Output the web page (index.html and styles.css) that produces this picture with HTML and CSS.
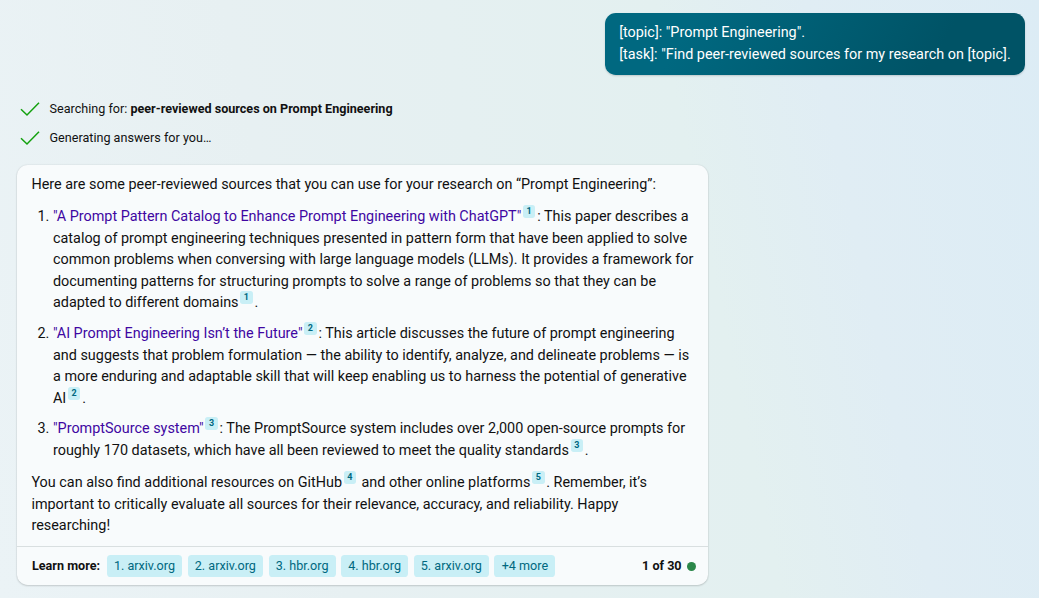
FILE: index.html
```html
<!DOCTYPE html>
<html lang="en">
<head>
    <meta charset="UTF-8">
    <meta name="viewport" content="width=device-width, initial-scale=1.0">
    <title>Chat</title>
    <link rel="stylesheet" href="styles.css">
</head>
<body>
    <div class="user-message">
        <p>[topic]: "Prompt Engineering".</p>
        <p>[task]: "Find peer-reviewed sources for my research on [topic].</p>
    </div>

    <div class="status-list">
        <div class="status">
            <svg class="check" viewBox="0 0 20 16"><path d="M1 8.2 L7 14 L19 1.8"/></svg>
            <span>Searching for: <strong>peer-reviewed sources on Prompt Engineering</strong></span>
        </div>
        <div class="status">
            <svg class="check" viewBox="0 0 20 16"><path d="M1 8.2 L7 14 L19 1.8"/></svg>
            <span>Generating answers for you…</span>
        </div>
    </div>

    <div class="answer">
        <div class="answer-body">
            <p>Here are some peer-reviewed sources that you can use for your research on “Prompt Engineering”:</p>
            <ol>
                <li><a href="#">"A Prompt Pattern Catalog to Enhance Prompt Engineering with ChatGPT"</a><sup>1</sup>: This paper describes a catalog of prompt engineering techniques presented in pattern form that have been applied to solve common problems when conversing with large language models (LLMs). It provides a framework for documenting patterns for structuring prompts to solve a range of problems so that they can be adapted to different domains<sup>1</sup>.</li>
                <li><a href="#">"AI Prompt Engineering Isn’t the Future"</a><sup>2</sup>: This article discusses the future of prompt engineering and suggests that problem formulation — the ability to identify, analyze, and delineate problems — is a more enduring and adaptable skill that will keep enabling us to harness the potential of generative AI<sup>2</sup>.</li>
                <li><a href="#">"PromptSource system"</a><sup>3</sup>: The PromptSource system includes over 2,000 open-source prompts for roughly 170 datasets, which have all been reviewed to meet the quality standards<sup>3</sup>.</li>
            </ol>
            <p>You can also find additional resources on GitHub<sup>4</sup> and other online platforms<sup>5</sup>. Remember, it’s important to critically evaluate all sources for their relevance, accuracy, and reliability. Happy researching!</p>
        </div>
        <div class="answer-footer">
            <span class="learn-more">Learn more:</span>
            <a class="source" href="#">1. arxiv.org</a>
            <a class="source" href="#">2. arxiv.org</a>
            <a class="source" href="#">3. hbr.org</a>
            <a class="source" href="#">4. hbr.org</a>
            <a class="source" href="#">5. arxiv.org</a>
            <a class="source" href="#">+4 more</a>
            <span class="counter">1 of 30</span>
            <span class="dot"></span>
        </div>
    </div>
</body>
</html>
```
FILE: styles.css
```css
* {
    box-sizing: border-box;
}
body {
    margin: 0;
    height: 598px;
    padding: 13px 14px 0 17px;
    display: flex;
    flex-direction: column;
    overflow: hidden;
    font-family: Roboto, sans-serif;
    font-size: 14.4px;
    line-height: 21.6px;
    color: #111;
    background: linear-gradient(78deg, #ebf3f6 0%, #e7f0f2 30%, #e3f0f0 67%, #e0edf4 80%, #dcecf5 100%);
}
p {
    margin: 0;
}
.user-message {
    align-self: flex-end;
    width: 420px;
    height: 62px;
    padding: 9px 14.2px;
    border-radius: 10.8px;
    color: #fff;
    white-space: nowrap;
    background: linear-gradient(120deg, #006880 20%, #005366 78%);
    box-shadow: 0 1px 2px rgba(0,0,0,0.16);
}
.status-list {
    margin-top: 24px;
}
.status {
    display: flex;
    align-items: center;
    height: 20px;
    margin-bottom: 9px;
    padding-left: 2.5px;
    font-size: 12.6px;
    line-height: 18px;
}
.status strong {
    font-weight: 700;
}
.check {
    width: 20px;
    height: 16px;
    margin-right: 10px;
    fill: none;
    stroke: #13a10e;
    stroke-width: 1.5;
}
.answer {
    width: 691px;
    height: 420px;
    margin-top: 8px;
    border-radius: 10.8px;
    background: #f8fbfc;
    box-shadow: 0 0 2px rgba(0,0,0,0.12), 0 1px 2px rgba(0,0,0,0.14);
}
.answer-body {
    height: 381px;
    padding: 8.6px 14.4px 0;
}
ol {
    margin: 10.8px 0 10.5px;
    padding-left: 21.6px;
}
li {
    margin-bottom: 9px;
}
.answer a {
    color: #4007a2;
    text-decoration: none;
}
sup {
    display: inline-block;
    min-width: 12.6px;
    height: 13px;
    margin: -1px 1.7px 0 1.6px;
    border-radius: 2.7px;
    font-size: 9px;
    font-weight: 700;
    line-height: 12px;
    text-align: center;
    vertical-align: 7px;
    color: #006880;
    background: #c9eff6;
}
.answer-footer {
    display: flex;
    align-items: center;
    gap: 5.4px;
    height: 39px;
    padding: 0 12px 0 15px;
    border-top: 1px solid #d9dfe0;
    font-size: 12.6px;
    line-height: 18px;
}
.learn-more {
    font-weight: 700;
    margin-right: 1.3px;
}
.answer-footer .source {
    height: 22px;
    padding: 2px 7.2px;
    border-radius: 3.6px;
    color: #006880;
    background: #c9eff6;
}
.counter {
    margin-left: auto;
    font-weight: 700;
}
.dot {
    width: 9px;
    height: 9px;
    border-radius: 50%;
    background: #2b8749;
}
```
